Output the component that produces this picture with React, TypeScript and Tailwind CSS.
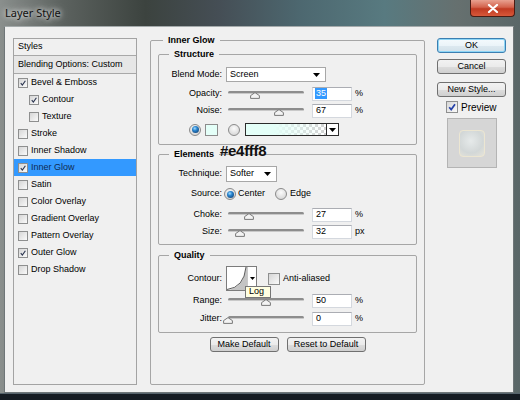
import React from "react";

type Item = { label: string; checked?: boolean; indent?: boolean; selected?: boolean };

const items: Item[] = [
  { label: "Bevel & Emboss", checked: true },
  { label: "Contour", checked: true, indent: true },
  { label: "Texture", indent: true },
  { label: "Stroke" },
  { label: "Inner Shadow" },
  { label: "Inner Glow", checked: true, selected: true },
  { label: "Satin" },
  { label: "Color Overlay" },
  { label: "Gradient Overlay" },
  { label: "Pattern Overlay" },
  { label: "Outer Glow", checked: true },
  { label: "Drop Shadow" },
];

function Check({ checked, big }: { checked?: boolean; big?: boolean }) {
  return (
    <div
      className={`${big ? "w-[12px] h-[12px]" : "w-[10px] h-[10px]"} shrink-0 border border-[#8e8f8f] bg-[linear-gradient(135deg,#d6d6d6,#fafafa)] flex items-center justify-center`}
    >
      {checked && (
        <svg viewBox="0 0 10 10" className="w-full h-full">
          <path
            d="M2.2 5.2 L4.2 7.6 L8 2.2"
            fill="none"
            stroke={big ? "#2440a8" : "#2b3550"}
            strokeWidth={big ? 1.7 : 1.4}
          />
        </svg>
      )}
    </div>
  );
}

function Radio({ on }: { on?: boolean }) {
  return (
    <div className="w-[12px] h-[12px] shrink-0 rounded-full border border-[#8a8a8a] bg-[radial-gradient(circle_at_50%_35%,#fbfbfb,#cfcfcf)] flex items-center justify-center">
      {on && (
        <div className="w-[7px] h-[7px] rounded-full bg-[radial-gradient(circle_at_40%_35%,#a6ddff_0%,#2a86d0_35%,#0c2f5c_100%)]" />
      )}
    </div>
  );
}

function Label({ children }: { children: React.ReactNode }) {
  return <div className="w-[63px] shrink-0 text-right">{children}</div>;
}

function Arrow() {
  return (
    <svg width="7" height="4" viewBox="0 0 7 4">
      <path d="M0 0 H7 L3.5 4 Z" fill="#000" />
    </svg>
  );
}

function Select({ w, text }: { w: string; text: string }) {
  return (
    <div
      className={`${w} h-full ml-[4px] bg-white border border-[#a7a7a7] flex items-center justify-between pl-[3px] pr-[5px]`}
    >
      <span>{text}</span>
      <Arrow />
    </div>
  );
}

function SliderRow({
  label,
  value,
  pct,
  unit,
  selected,
  className = "",
}: {
  label: string;
  value: string;
  pct: number;
  unit: string;
  selected?: boolean;
  className?: string;
}) {
  return (
    <div className={`flex items-center h-[17px] ${className}`}>
      <Label>{label}</Label>
      <div className="relative w-[80px] h-[14px] ml-[4px]">
        <div className="absolute left-[2px] right-[2px] top-[4px] h-[3px] rounded-full bg-[#8d8d8d] border-b border-[#c9c9c9]" />
        <svg
          className="absolute top-[5px]"
          style={{ left: 2 + pct * 76 - 5 }}
          width="10"
          height="7"
          viewBox="0 0 10 7"
        >
          <path d="M5 0.6 L9.4 3.6 V6.4 H0.6 V3.6 Z" fill="#f3f3f3" stroke="#6b6b6b" strokeWidth="0.9" />
        </svg>
      </div>
      <div className="ml-[6px] w-[40px] h-[14px] bg-white border border-[#d4d8de] border-t-[#abadb3] flex items-center pl-[2px]">
        <span className={selected ? "bg-[#3399ff] text-white px-[1px] leading-[11px]" : "pl-[1px]"}>{value}</span>
      </div>
      <div className="ml-[3px]">{unit}</div>
    </div>
  );
}

function Btn({ children, w, def }: { children: React.ReactNode; w: string; def?: boolean }) {
  return (
    <div
      className={`${w} h-[15px] rounded-[3px] border ${
        def
          ? "border-[#3c7fb1] shadow-[inset_0_0_0_1px_#8ed6f6] bg-[linear-gradient(#f4fafd_0%,#ebf4f9_50%,#dde9f0_51%,#d2e1ea_100%)]"
          : "border-[#707070] bg-[linear-gradient(#f2f2f2_0%,#ebebeb_50%,#dddddd_51%,#cfcfcf_100%)]"
      } flex items-center justify-center leading-none`}
    >
      {children}
    </div>
  );
}

export default function App() {
  return (
    <div className="relative w-[520px] h-[400px] overflow-hidden font-['Liberation_Sans',Arial,sans-serif] text-[9px] text-black bg-[linear-gradient(90deg,#8a8f8d_0%,#5c625f_12%,#3c433f_28%,#454e55_42%,#4d6870_58%,#587a80_74%,#66706f_88%,#5a6768_100%)]">
      {/* Title bar */}
      <div className="h-[26px] flex justify-between">
        <div className="pl-[5px] flex items-center font-['Noto_Sans','Open_Sans',sans-serif] text-[11px] text-[#111] [text-shadow:0_0_5px_#fff,0_0_9px_rgba(255,255,255,0.8)]">
          Layer Style
        </div>
        <div className="mr-[5px] w-[45px] h-[17px] rounded-b-[4px] border border-t-0 border-[#4a1c14] bg-[linear-gradient(#e8a190_0%,#d3624c_45%,#c03a22_55%,#d8583a_100%)] flex items-center justify-center">
          <svg width="12" height="9" viewBox="0 0 12 9">
            <path d="M2 1 L10 8 M10 1 L2 8" stroke="#fff" strokeWidth="2.2" strokeLinecap="round" />
          </svg>
        </div>
      </div>

      {/* Body */}
      <div className="ml-[4px] w-[510px] h-[367px] bg-[#f0f0f0] border border-[#6f7678] border-t-[#a4aaab] flex">
        {/* Styles list */}
        <div className="ml-[8px] mt-[11px] w-[124px] h-[347px] border border-[#a3a3a3] flex flex-col">
          <div className="h-[17px] border-b border-[#a8a8a8] flex items-center pl-[4px]">Styles</div>
          <div className="h-[18px] border-b border-[#a8a8a8] bg-[#e6e6e6] flex items-center pl-[4px]">
            Blending Options: Custom
          </div>
          {items.map((it) => (
            <div
              key={it.label}
              className={`h-[17px] flex items-center gap-[3px] ${it.indent ? "pl-[15px]" : "pl-[4px]"} ${
                it.selected ? "bg-[#3399ff] text-[#0f2a52]" : ""
              }`}
            >
              <Check checked={it.checked} />
              <span>{it.label}</span>
            </div>
          ))}
        </div>

        {/* Inner Glow panel */}
        <fieldset className="ml-[13px] mt-[8px] w-[275px] h-[350px] border border-[#a6a6a6] rounded-[2px] px-[7px]">
          <legend className="ml-[5px] px-[5px] font-bold leading-[10px]">Inner Glow</legend>

          <fieldset className="mt-[4px] border border-[#a6a6a6] rounded-[2px] pt-[7px] pb-[6px]">
            <legend className="ml-[10px] px-[5px] font-bold leading-[10px]">Structure</legend>
            <div className="flex items-center h-[17px]">
              <Label>Blend Mode:</Label>
              <div className="h-[15px] flex">
                <Select w="w-[100px]" text="Screen" />
              </div>
            </div>
            <SliderRow label="Opacity:" value="35" pct={0.35} unit="%" selected className="mt-[2px]" />
            <SliderRow label="Noise:" value="67" pct={0.67} unit="%" />
            <div className="mt-[2px] h-[17px] flex items-center pl-[30px]">
              <Radio on />
              <div className="ml-[4px] w-[13px] h-[12px] border border-[#8c8c8c] bg-[#e4fff8]" />
              <div className="ml-[10px]">
                <Radio />
              </div>
              <div className="ml-[5px] w-[94px] h-[13px] border border-[#2b2b2b] flex">
                <div className="flex-1 bg-[repeating-conic-gradient(#d2d2d2_0%_25%,#ffffff_0%_50%)] bg-[length:6px_6px]">
                  <div className="w-full h-full bg-[linear-gradient(90deg,#e4fff8_0%,#e4fff8_35%,rgba(228,255,248,0)_100%)]" />
                </div>
                <div className="w-[12px] border-l border-[#2b2b2b] bg-white flex items-center justify-center">
                  <Arrow />
                </div>
              </div>
            </div>
          </fieldset>

          <fieldset className="mt-[4px] border border-[#a6a6a6] rounded-[2px] pt-[6px] pb-[4px]">
            <legend className="ml-[10px] px-[5px] font-bold leading-[10px]">Elements</legend>
            <div className="flex items-center h-[18px]">
              <Label>Technique:</Label>
              <div className="h-[16px] flex">
                <Select w="w-[51px]" text="Softer" />
              </div>
            </div>
            <div className="mt-[2px] flex items-center h-[18px]">
              <Label>Source:</Label>
              <div className="ml-[2px]">
                <Radio on />
              </div>
              <span className="ml-[2px]">Center</span>
              <div className="ml-[10px]">
                <Radio />
              </div>
              <span className="ml-[3px]">Edge</span>
            </div>
            <SliderRow label="Choke:" value="27" pct={0.27} unit="%" className="mt-[3px]" />
            <SliderRow label="Size:" value="32" pct={0.16} unit="px" />
          </fieldset>

          <fieldset className="mt-[5px] border border-[#a6a6a6] rounded-[2px] pt-[5px] pb-[5px]">
            <legend className="ml-[10px] px-[5px] font-bold leading-[10px]">Quality</legend>
            <div className="flex items-center h-[27px]">
              <Label>Contour:</Label>
              <div className="relative ml-[4px] w-[31px] h-[25px] border border-[#7c7c7c] bg-white flex">
                <div className="w-[20px] h-full">
                  <svg width="20" height="23" viewBox="0 0 20 23">
                    <path d="M0 23 Q17 21 19 0 L20 0 L20 23 Z" fill="#c4c4c4" />
                    <path d="M0 22.5 Q17 20.5 19 0" fill="none" stroke="#4a4a4a" strokeWidth="0.9" />
                  </svg>
                </div>
                <div className="flex-1 border-l border-[#c9c9c9] flex items-center justify-center">
                  <svg width="5" height="3" viewBox="0 0 5 3">
                    <path d="M0 0 H5 L2.5 3 Z" fill="#000" />
                  </svg>
                </div>
                <div className="absolute left-[18px] top-[19px] z-10 w-[26px] h-[12px] bg-[#ffffe1] border border-[#767676] flex items-center pl-[3px]">
                  Log
                </div>
              </div>
              <div className="ml-[11px]">
                <Check big />
              </div>
              <span className="ml-[3px]">Anti-aliased</span>
            </div>
            <SliderRow label="Range:" value="50" pct={0.5} unit="%" />
            <SliderRow label="Jitter:" value="0" pct={0} unit="%" className="mt-[1px]" />
          </fieldset>

          <div className="mt-[4px] flex justify-center gap-[8px]">
            <Btn w="w-[69px]">Make Default</Btn>
            <Btn w="w-[79px]">Reset to Default</Btn>
          </div>
        </fieldset>

        {/* Right column */}
        <div className="ml-[12px] mt-[11px] w-[69px] flex flex-col">
          <Btn w="w-[69px]" def>
            OK
          </Btn>
          <div className="mt-[6px]">
            <Btn w="w-[69px]">Cancel</Btn>
          </div>
          <div className="mt-[8px]">
            <Btn w="w-[69px]">New Style...</Btn>
          </div>
          <div className="mt-[4px] ml-[9px] flex items-center gap-[3px] h-[12px]">
            <Check checked big />
            <span className="text-[10px]">Preview</span>
          </div>
          <div className="mt-[5px] ml-[10px] w-[50px] h-[50px] border border-[#b4b4b4] bg-[#d6d6d6] flex items-center justify-center">
            <div className="w-[26px] h-[27px] rounded-[4px] border border-[#ece6d2] bg-[radial-gradient(circle_at_45%_40%,#e6eaea_0%,#d2d7d7_60%,#e6e4da_100%)]" />
          </div>
        </div>
      </div>

      {/* bottom frame */}
      <div className="h-[7px] border-t border-[#56636c] bg-[#151b22]" />

      {/* annotation */}
      <div className="absolute left-[220px] top-[143px] font-bold text-[15px] leading-[15px] tracking-[-0.3px] text-[#111]">
        #e4fff8
      </div>
    </div>
  );
}
